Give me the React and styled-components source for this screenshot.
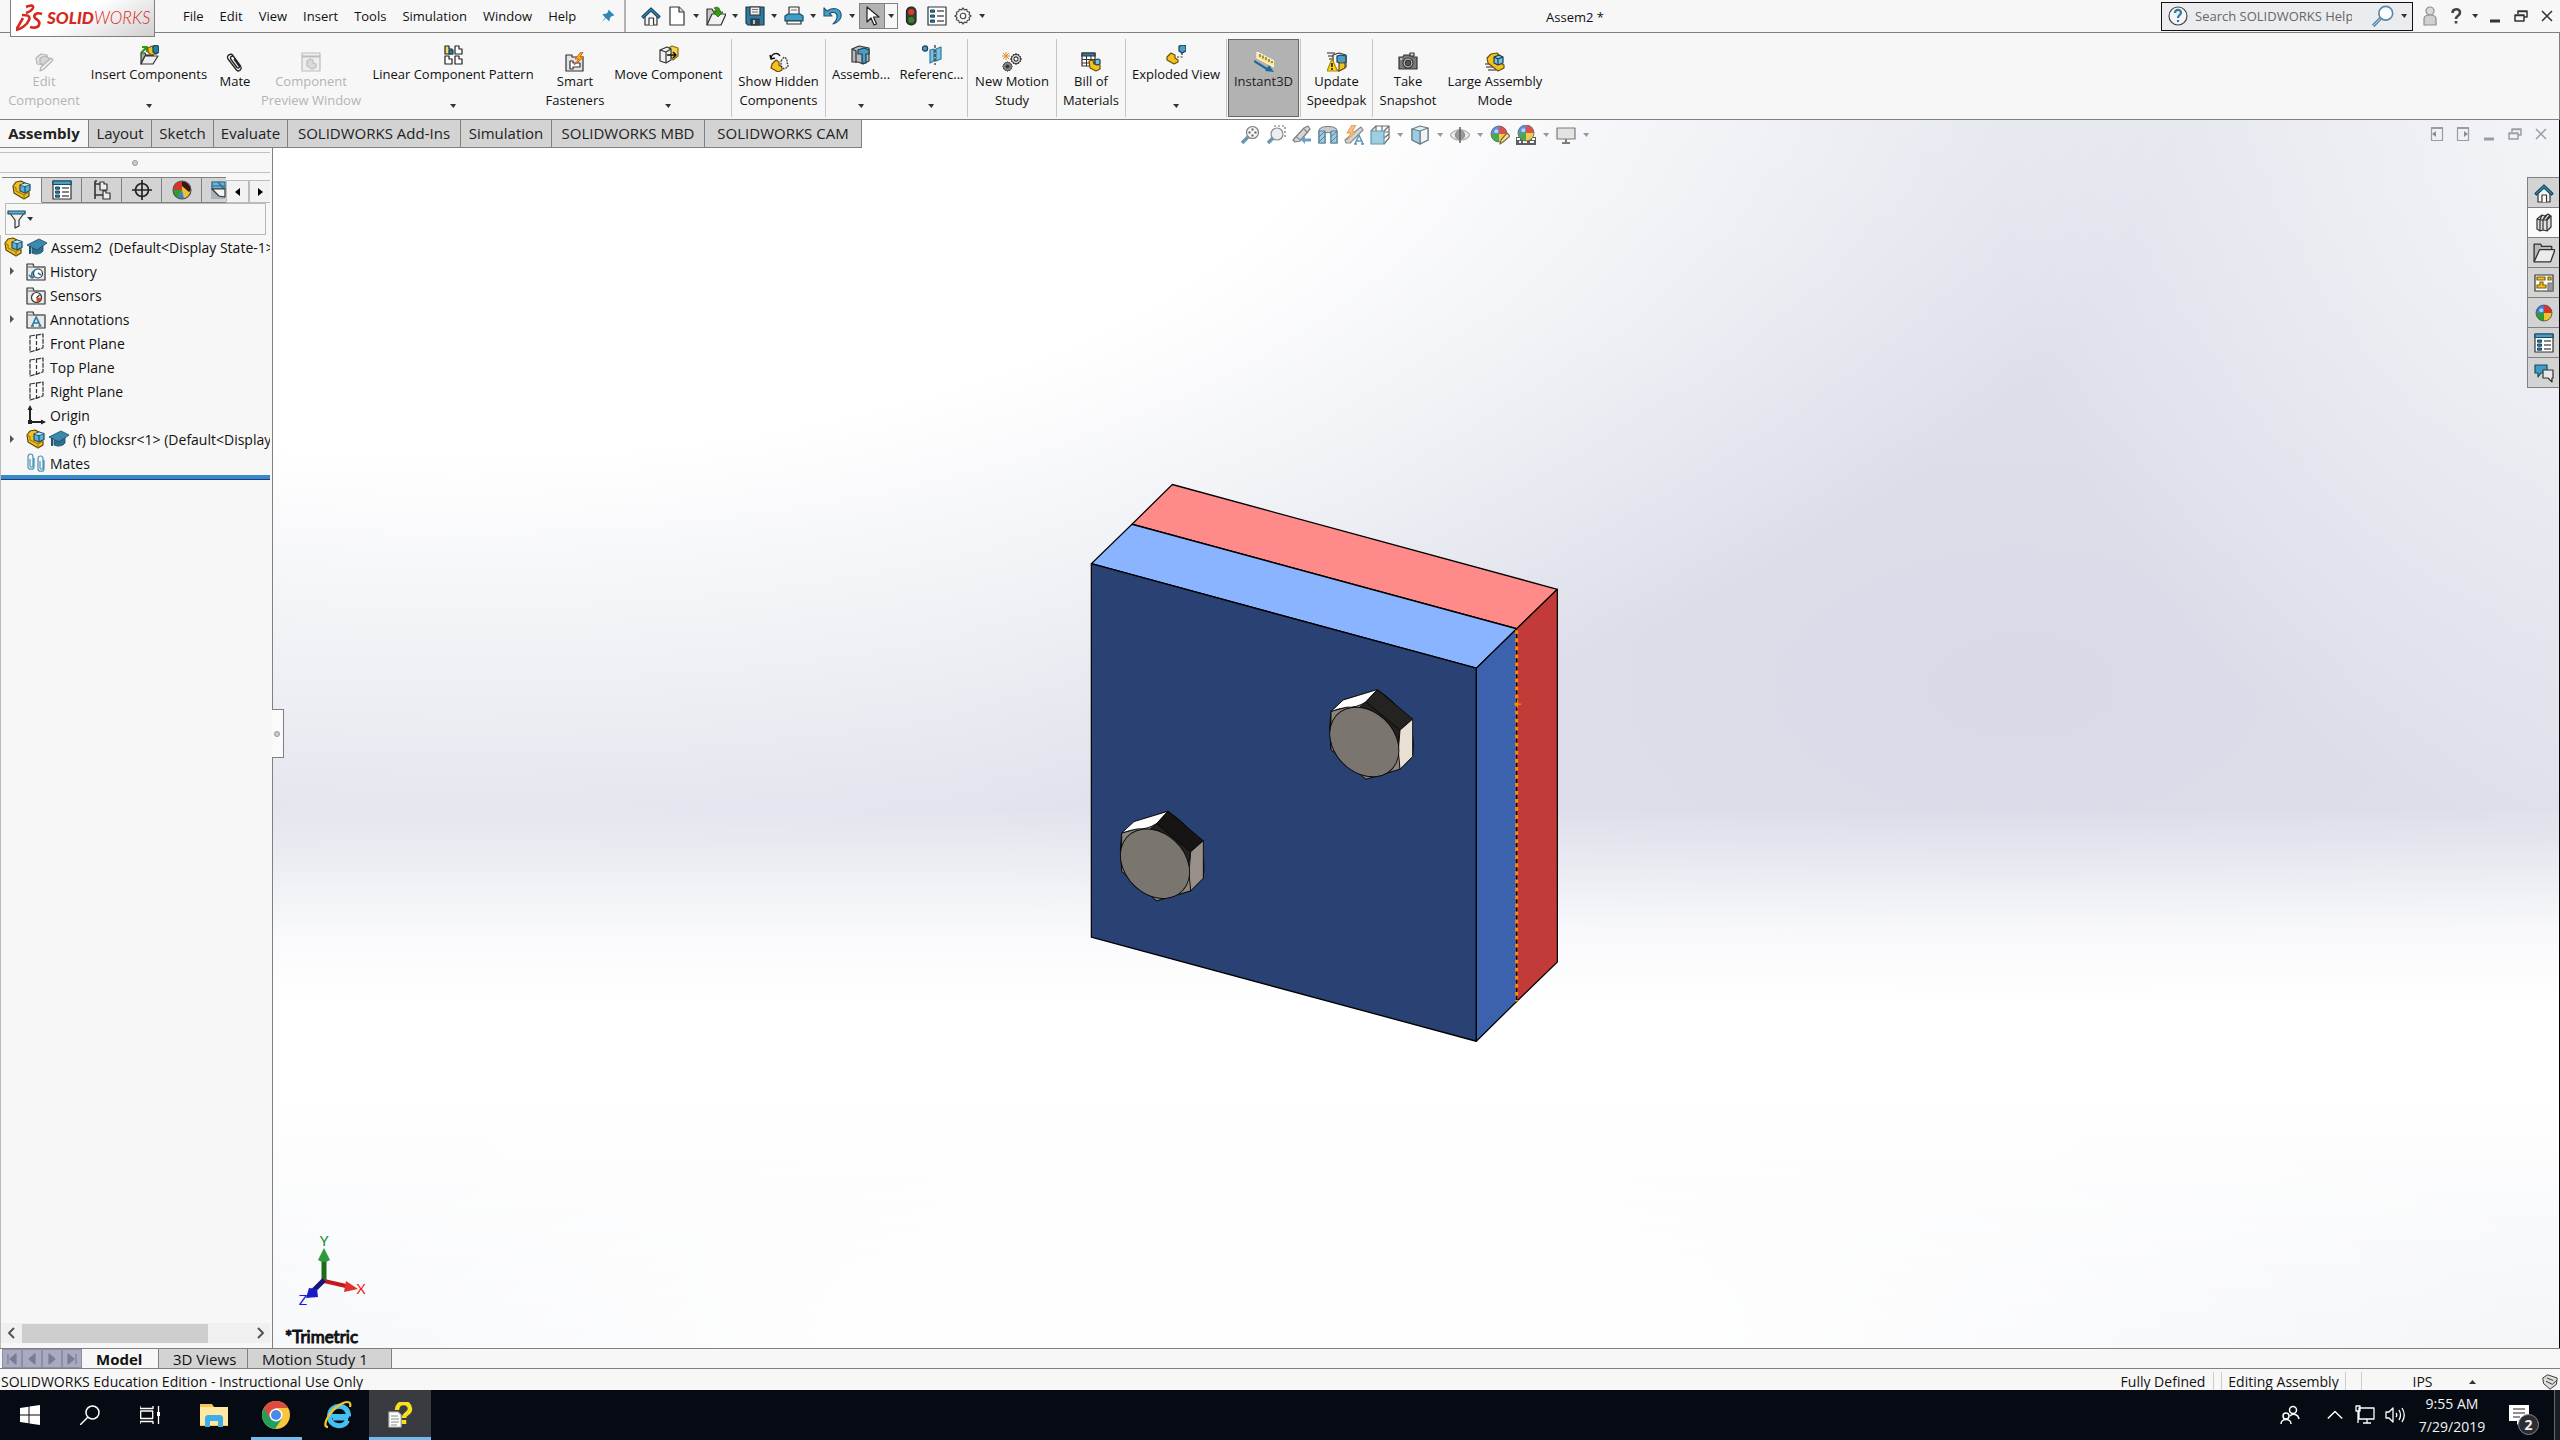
import React from "react";
import styled, { createGlobalStyle, css } from "styled-components";

/* ---------- palette ---------- */
const line = "#808080";
const soft = "#c0c0c0";
const chrome = "#f7f7f7";
const tabGrey = "#d3d3d3";
const ink = "#333";
const blue = "#2b7ba3";
const sky = "#7cc0de";
const gold = "#f5c11e";

const Global = createGlobalStyle`
  *, *::before, *::after { box-sizing: border-box; }
  body { margin: 0; background: ${chrome}; color: #111; font: 13px/19px "Open Sans", "Noto Sans", sans-serif; }
  button, input { font: inherit; color: inherit; margin: 0; padding: 0; border: 0; background: none; border-radius: 0; }
  ul { list-style: none; margin: 0; padding: 0; }
  svg { display: block; flex: none; }
`;

/* ---------- icons ---------- */
const Svg = ({ size = 20, box = 20, children, ...rest }) => (
  <svg width={size} height={size} viewBox={`0 0 ${box} ${box}`} fill="none" stroke={ink} strokeWidth="1.2" strokeLinejoin="round" aria-hidden="true" {...rest}>
    {children}
  </svg>
);

const Caret = ({ color = "#333", up }) => (
  <svg width="7" height="4" viewBox="0 0 7 4" aria-hidden="true">
    <path d={up ? "M3.500 0 7 4H0z" : "M0 0h6L3.500 4z"} fill={color} />
  </svg>
);

const AssemblyIcon = (p) => (
  <Svg {...p}>
    <path d="M1 6 4 2l5-1 4 2v7l4 2v4l-5 3L2 13z" fill={gold} stroke="#5a4610" />
    <path d="M1 6l3 2v3l8 4v4M12 15l5-3" stroke="#a67c0a" />
    <path d="M8 5l5-2 5 1.500v6L13 13l-5-2z" fill="#5fb0d4" stroke="#1c4f6b" />
    <path d="M8 5l5 1.500L18 4.500M13 6.500V13" stroke="#1c4f6b" />
    <path d="M8.500 5l4.500-1.500 4.500 1.200L13 6z" fill="#c4e5f3" stroke="none" />
  </Svg>
);
const EditComponentIcon = () => (
  <Svg stroke="#b5b5b5">
    <path d="M2 6l5-4 6 1 1 5-3 5-8-1z" fill="#e4e4e4" />
    <path d="M6 6l5-2 4 2v5l-5 2-4-2z" fill="#d4d4d4" />
    <path d="M17 6l2 2-9 9-4 2 1-4z" fill="#eee" />
  </Svg>
);
const InsertIcon = () => (
  <Svg>
    <path d="M2 19V8h4l1 2h7v1H6z" fill="#aaa" />
    <path d="M2 19 6 11h13l-5 8z" fill="#eee" />
    <path d="M2 8l5-5M3 2h5v5" stroke="#2e9a16" strokeWidth="2.200" />
    <path d="M9 3l4-2 3 4v4l-4 1-3-3z" fill={gold} stroke="#7a5c06" />
    <path d="M14 1l4-1 2 2v5l-3 2-3-2z" fill={blue} stroke="#154055" />
  </Svg>
);
const MateIcon = () => (
  <Svg>
    <path d="M16 15 8 3.500C6 1 1 3 3 7l8.500 11c2.500 2.500 6-1 4-4L9 5C7 3 4.500 5 6 7.500l6 8c1.500 1.200 3 0 2-1.500L9 7" stroke="#222" strokeWidth="1.300" />
  </Svg>
);
const PreviewIcon = () => (
  <Svg stroke="#bdbdbd">
    <path d="M1 1h18v18H1z" fill="#eee" />
    <path d="M1 4.500h18" strokeWidth="2" />
    <path d="M6 9l3-2 3 1v3l3 1v3l-4 2-5-3z" fill="#d9d9d9" />
  </Svg>
);
const PatternIcon = () => (
  <Svg>
    {[[2, 1], [12, 1], [2, 11], [12, 11]].map(([x, y], i) => (
      <g key={i} transform={`translate(${x} ${y})`}>
        <path d="M0 0h4v3h3v5H0z" fill={i ? "#fff" : "#f7d774"} stroke="#222" />
        {i === 0 && <path d="M4 4h4v4H4z" fill={blue} stroke="#154055" />}
      </g>
    ))}
  </Svg>
);
const SmartIcon = () => (
  <Svg>
    <path d="M1 3h6v2h11v14H1z" fill="#e4e4e4" />
    <path d="M5 9h3v2h7v4H8v2H5z" fill="#fff" />
    <path d="M16 0l-6 7h4l-5 6 10-8h-4l3-5z" fill="#fcb514" stroke="#c4541a" strokeWidth="0.900" />
  </Svg>
);
const MoveIcon = () => (
  <Svg>
    <path d="M8 4l5-3 6 2v8l-5 4z" fill="#f6cf55" stroke="#8a6a0c" />
    <path d="M1 5l7-3 4 2v11l-5 3-6-2z" fill="#f0f0f0" />
    <path d="M1 5l6 2 5-3M7 7v11" />
    <path d="M8 10h9M14 7l3 3-3 3" stroke="#111" strokeWidth="1.500" />
  </Svg>
);
const ShowHiddenIcon = () => (
  <Svg>
    <path d="M2 6c1-5 7-6 9-2M1 3l1 4 4-1" stroke="#111" strokeWidth="1.500" />
    <path d="M3 12l4-4 3 2v3l3 2v3l-4 2-7-4z" fill={gold} stroke="#6a500a" />
    <path d="M12 9l3-4 3 2v4l1 1v3l-4 2-3-3z" fill="#f3f3f3" strokeDasharray="2 1" />
  </Svg>
);
const AssemblyFeatIcon = () => (
  <Svg>
    <path d="M1 4l7-3 10 2v13l-6 3-5-2-6 0z" fill="#b9b9b9" />
    <path d="M7 5l6-2 5 2v4h-3v9h-4V9H7z" fill="#4a9ec4" stroke="#154055" />
    <path d="M1 4l4 2v12" />
  </Svg>
);
const ReferenceIcon = () => (
  <Svg>
    <circle cx="3" cy="3.500" r="2.600" fill="#4a9ec4" stroke="#154055" />
    <path d="M8 5l4-1v12l-4 2zM14 4l5-2v12l-5 2z" fill="#7cc0de" stroke={blue} />
    <path d="M13 0v20" stroke="#222" strokeDasharray="3 1.500" />
  </Svg>
);
const gearPath = "M10 1l1.500 2.200 2.600-.7.700 2.600 2.600.7-.7 2.600L19 10l-2.300 1.600.7 2.600-2.600.7-.7 2.600-2.600-.7L10 19l-1.500-2.200-2.600.7-.7-2.600-2.600-.7.700-2.600L1 10l2.300-1.600-.7-2.600 2.600-.7.700-2.600 2.600.7z";
const GearIcon = (p) => (
  <Svg {...p}>
    <path d={gearPath} fill="#f4f4f4" stroke="#444" />
    <circle cx="10" cy="10" r="3" fill="#fff" stroke="#444" />
  </Svg>
);
const MotionIcon = () => (
  <Svg>
    <path d="M4 0v8M0 4h8M1 1l6 6M7 1 1 7" stroke="#e08a2a" strokeWidth="1" />
    <g transform="translate(8 1) scale(.6)"><path d={gearPath} fill="#fff" strokeWidth="1.800" /><circle cx="10" cy="10" r="3.500" strokeWidth="1.800" /></g>
    <g transform="translate(0 9) scale(.55)"><path d={gearPath} fill="#8a8a8a" strokeWidth="1.600" /><circle cx="10" cy="10" r="3" fill="#333" /></g>
  </Svg>
);
const BomIcon = () => (
  <Svg>
    <path d="M1 1h13v13H1z" fill="#fff" />
    <path d="M1 1h13v3H1z" fill={blue} />
    <path d="M1 7.500h13M1 11h13M5.500 4v10M10 4v10" strokeWidth="1" />
    <path d="M8 9l4-1 1 4 6 1v4l-4 2-6-3z" fill={gold} stroke="#6a500a" />
    <path d="M14 8l3-1 2 1v4l-3 1-2-1z" fill={sky} stroke="#154055" />
  </Svg>
);
const ExplodedIcon = () => (
  <Svg>
    <path d="M1 12l4-4 4 2v3l3 2v2l-4 2-7-4z" fill={gold} stroke="#6a500a" />
    <path d="M13 1l4-1 3 1v5l-4 2-3-2z" fill="#4a9ec4" stroke="#154055" />
    <path d="M16 8v4h-5" stroke="#333" strokeDasharray="2 1.500" />
  </Svg>
);
const Instant3DIcon = () => (
  <Svg>
    <path d="M3 0l17 9v6L3 6z" fill="#ffe27a" stroke="#fff8d8" />
    <path d="M6 2v3M9 3.500v3M12 5v3M15 7v3M18 9v2" stroke="#444" strokeWidth="1" />
    <path d="M0 9l13 8" stroke="#1f6b96" strokeWidth="2.200" />
    <path d="M20 20l-9-1 4-6z" fill="#1f6b96" stroke="none" />
  </Svg>
);
const SpeedpakIcon = () => (
  <Svg>
    <path d="M0 1h8M1 4h6M2 7h4" stroke="#222" strokeWidth="1" />
    <path d="M6 3l6-2 7 2v12l-7 4-6-3z" fill="#f4f4f4" />
    <path d="M10 4l4-1 5 1v6l-4 2-5-2z" fill="#4a9ec4" stroke="#154055" />
    <path d="M12 11l6 0v5l-6 3z" fill={gold} stroke="#6a500a" />
    <path d="M5 7l5.500 12H0z" fill="#ffd51c" stroke="#b08800" />
    <path d="M5 11v4M5 16v2" stroke="#111" strokeWidth="1.500" />
  </Svg>
);
const CameraIcon = () => (
  <Svg>
    <path d="M1 5h4l1-2h8l1 2h4v12H1z" fill="#7b7b7b" />
    <path d="M12 1h4v3h-4z" fill="#ddd" />
    <circle cx="10" cy="11" r="5" fill="#ddd" />
    <circle cx="10" cy="11" r="2.800" fill="#555" />
    <path d="M2 7h2" stroke="#fff" />
  </Svg>
);
const LargeAsmIcon = () => (
  <Svg>
    <path d="M0 12h6M1 15h7M3 18h8" stroke="#222" />
    <path d="M2 6l4-4 6-1 3 3v7l4 2v3l-6 3-10-8z" fill={gold} stroke="#6a500a" />
    <path d="M9 5l5-2 4 2v6l-5 2-4-2z" fill="#7cc0de" stroke="#154055" />
    <path d="M9 5l4 2 5-2M13 7v6" stroke="#154055" />
  </Svg>
);
const HomeIcon = (p) => (
  <Svg {...p}>
    <path d="M4 10v9h12v-9l-6-6z" fill="#f4f4f4" />
    <path d="M8 19v-7h4.500v7" fill="#fff" />
    <path d="M1 10.500 10 2l9 8.500-1.500 1.500L10 5l-7.500 7z" fill="#3f9cc8" stroke="#174a63" />
  </Svg>
);
const NewIcon = () => (
  <Svg><path d="M3 1h9l5 5v13H3z" fill="#fff" /><path d="M12 1v5h5" fill="#ddd" /></Svg>
);
const OpenIcon = () => (
  <Svg>
    <path d="M1 19V3h5l1 2h7v3" fill="#c8c8c8" />
    <path d="M1 19 6 8h14l-5 11z" fill="#f1f1f1" />
    <path d="M8 2c4-2 6 0 6 4h3l-5 5-5-5h3c0-2 0-3-2-4z" fill="#3a9a16" stroke="#1f6a08" strokeWidth="0.800" />
  </Svg>
);
const SaveIcon = () => (
  <Svg>
    <path d="M1 1h18v18H3l-2-2z" fill={blue} stroke="#1c3d4e" />
    <path d="M5 1h10v8H5z" fill="#eee" /><path d="M7 3.500h6M7 6h6" stroke="#777" strokeWidth="1" />
    <path d="M6 13h8v6H6z" fill="#444" /><path d="M8 14h2v4H8z" fill="#8fd0ec" stroke="none" />
  </Svg>
);
const PrintIcon = () => (
  <Svg>
    <path d="M5 8V1h10v7" fill="#f4f4f4" /><path d="M7 4h6" stroke="#888" />
    <path d="M1 10l3-2h12l3 2v5H1z" fill="#3f9cc8" stroke="#174a63" />
    <path d="M3 15h14v3H3z" fill="#fff" />
  </Svg>
);
const UndoIcon = () => (
  <Svg><path d="M1 2v8h8L6.500 7.500C10 5 15 7 14 11c0 3-2 5-4 7 6-2 9-6 8-10C17 2 9 1 4 5z" fill="#4a9ec4" stroke="#215b78" /></Svg>
);
const CursorIcon = () => (
  <Svg><path d="M5 1v15l4-4 3 7 2.500-1L11.500 11H17z" fill="#fff" stroke="#222" /></Svg>
);
const TrafficIcon = () => (
  <Svg>
    <rect x="5.500" y="1" width="9.500" height="18" rx="4.500" fill="#3a3a3a" stroke="#222" />
    <circle cx="10.200" cy="6" r="3" fill="#e23a1c" stroke="none" /><circle cx="10.200" cy="14" r="3" fill="#2c8a1c" stroke="none" />
  </Svg>
);
const ListIcon = ({ header, ...p }) => (
  <Svg {...p}>
    <path d="M1 1h18v18H1z" fill="#fff" />
    {header && <path d="M1 1h18v3.500H1z" fill="#4a9ec4" stroke="#174a63" />}
    {(header ? [7, 11, 15] : [4, 9, 14]).map((y) => (
      <g key={y}><path d={`M3.500 ${y}h4v2.200h-4z`} fill={blue} stroke="#174a63" strokeWidth="1" /><path d={`M10 ${y + 1}h7`} strokeWidth="1.200" /></g>
    ))}
  </Svg>
);
const PinIcon = () => (
  <Svg size={14} stroke="none"><path d="M11 1l8 8-2 1-1-.5-3.500 3.500c.5 2 0 3.500-1 4.500L7 13l-6 6 5-7-4-4c1.500-1.300 3-1.500 5-1L10.500 4 10 3z" fill="#2f86b8" /></Svg>
);
const UserIcon = () => (
  <Svg stroke="#8d8d8d"><circle cx="10" cy="5" r="4" fill="#d9d9d9" /><path d="M4 19v-6c0-3 2-4 6-4s6 1 6 4v6z" fill="#d0d0d0" /></Svg>
);
const HelpCircle = () => (
  <Svg><circle cx="10" cy="10" r="9" fill="#f5f5f5" stroke="#444" /><path d="M7 7c0-4 6-4 6-.5C13 9 10 9 10 12M10 14v2" stroke={blue} strokeWidth="2.200" /></Svg>
);
const HelpMark = () => (
  <Svg><path d="M6.500 7c0-5 7.500-5 7.500-.5C14 10 10 9.500 10 13M10 15v2.500" stroke="#444" strokeWidth="2.600" /></Svg>
);
const Magnifier = ({ size = 22 }) => (
  <Svg size={size}>
    <path d="M8 12 1 19" stroke="#3f6e96" strokeWidth="3" /><path d="M8 12 1 19" stroke="#a9d0e8" strokeWidth="1.200" />
    <circle cx="12.500" cy="7.500" r="6.300" fill="#fbfdff" stroke="#5d88ad" strokeWidth="1.500" />
  </Svg>
);
const MinIcon = ({ color = ink }) => <Svg size={16} box={16} stroke={color}><path d="M3 13h10" strokeWidth="3" /></Svg>;
const RestoreIcon = ({ color = ink }) => <Svg size={16} box={16} stroke={color} strokeWidth="1.500"><path d="M5 6V3h9v6h-3M2 7h9v6H2zM2 7.500h9M5 3.500h9" /></Svg>;
const CloseIcon = ({ color = ink }) => <Svg size={16} box={16} stroke={color} strokeWidth="1.500"><path d="M3 3l10 10M13 3 3 13" /></Svg>;
const PaneIcon = ({ right }) => (
  <Svg size={16} box={16} stroke="#9a9da2"><path d="M2.500 1.500h11v13h-11zM2.500 2.500h11" /><path d={right ? "M9 5v6l4-3z" : "M7 5v6L3 8z"} fill="#8a8d92" stroke="none" /></Svg>
);

/* heads-up view toolbar */
const ZoomFit = () => (
  <Svg><path d="M8 12 2 18" stroke="#4c86a8" strokeWidth="3.500" /><circle cx="12.500" cy="7.500" r="6" fill="#f4f4f4" stroke="#666" /><path d="M12.500 3.500v2M12.500 9.500v2M8.500 7.500h2M14.500 7.500h2" stroke="#444" strokeWidth="2" /></Svg>
);
const ZoomArea = () => (
  <Svg><path d="M8 1h11v12" stroke="#555" strokeDasharray="2 2" /><path d="M7 13 2 18" stroke="#4c86a8" strokeWidth="3.500" /><circle cx="11" cy="9" r="6" fill="#e8edf1" stroke="#777" /></Svg>
);
const PrevView = () => (
  <Svg><path d="M1 15 12 3l4-2 2 3-5 6-5 6-5 1z" fill="#cfcfcf" stroke="#666" /><path d="M4 12l5 3M12 4l4 4" stroke="#777" /><path d="M9 15l4-4v2.500h6v3h-6V19z" fill="#4c93bb" stroke="none" /></Svg>
);
const SectionIcon = () => (
  <Svg><path d="M1 6c0-6 18-6 18 0v12h-6V9c0-2-6-2-6 0v9H1z" fill="#c4c4c4" stroke="#666" /><path d="M1 6h6v12H1zM13 6h6v12h-6z" fill="#8fc0d8" stroke="#36708e" /><path d="M1 12l6-6M1 17l6-6M13 12l6-6M13 17l6-6" stroke="#36708e" strokeWidth="1" /></Svg>
);
const DynAnnot = () => (
  <Svg><path d="M1 15 13 5l4-3 2 3-8 8-5 5-4 0z" fill="#d0d0d0" stroke="#777" /><path d="M12 0H8L3 8h4l-4 7 9-8H8z" fill="#f7b96a" stroke="#d07a2c" strokeWidth="0.900" /><path d="M11 19l4-9 4 9M12.500 16h5M10 19h3M17 19h3" stroke="#3f86ad" strokeWidth="1.500" /></Svg>
);
const OrientIcon = () => (
  <Svg stroke="#555"><path d="M1 6l5-5h13v12l-5 6" fill="#fafafa" /><path d="M6 1v5M14 6l5-5M12 1v5M19 7h-5M14 13l5-4" /><path d="M1 6h13v13H1z" fill="#8fc6dd" stroke="#4486a5" /></Svg>
);
const DisplayStyle = () => (
  <Svg stroke="#567"><path d="M2 4l8-3 8 2v12l-8 4-8-4z" fill="#d7ecf5" /><path d="M10 6l8-3v12l-8 4z" fill="#f2f2f2" /><path d="M2 4l8 2v13l-8-4z" fill="#8cc4dc" /></Svg>
);
const EyeIcon = () => (
  <Svg stroke="#999"><path d="M0 10c5-7 15-7 20 0-5 7-15 7-20 0z" fill="#e8e8e8" /><circle cx="10" cy="10" r="4.500" fill="#8a8a8a" stroke="#777" /><path d="M10 2v16" stroke="#444" strokeWidth="1.500" /></Svg>
);
const Ball = ({ r = 9, cx = 10, cy = 10 }) => (
  <g stroke="none">
    <path d={`M${cx} ${cy}V${cy - r}A${r} ${r} 0 0 0 ${cx - r} ${cy}z`} fill="#3d7be0" />
    <path d={`M${cx} ${cy}V${cy - r}A${r} ${r} 0 0 1 ${cx + r} ${cy}z`} fill="#d8342c" />
    <path d={`M${cx} ${cy}V${cy + r}A${r} ${r} 0 0 1 ${cx - r} ${cy}z`} fill="#2f9c2c" />
    <path d={`M${cx} ${cy}V${cy + r}A${r} ${r} 0 0 0 ${cx + r} ${cy}z`} fill="#ecc62a" />
    <circle cx={cx} cy={cy} r={r} stroke="#555" strokeWidth="0.900" fill="none" />
    <circle cx={cx - r / 3} cy={cy - r / 3} r={r / 4} fill="#fff" opacity="0.600" />
  </g>
);
const BallIcon = (p) => <Svg {...p}><Ball r={8} /></Svg>;
const DisplayBall = () => (
  <Svg stroke="none">
    <circle cx="10" cy="10" r="9" fill="#e8c52c" />
    <path d="M10 10V1a9 9 0 0 0-9 9z" fill="#d8342c" /><path d="M10 10H1a9 9 0 0 0 5 8z" fill="#2f9c2c" /><path d="M10 10 6 18a9 9 0 0 0 6 .8z" fill="#3d7be0" />
    <path d="M10 1a9 9 0 0 1 9 9l-2 2-7-6z" fill="#3a1414" /><circle cx="10" cy="10" r="9" fill="none" stroke="#555" />
  </Svg>
);
const EditAppear = () => <Svg><Ball r={8} cx={9} cy={9} /><path d="M10 19l1-4 6-7 3 3-7 6z" fill="#ffe08a" stroke="#6b5222" /></Svg>;
const SceneIcon = () => <Svg><path d="M0 12h20v8H0z" fill="#444" stroke="none" /><path d="M1 14h3M7 17h4M14 17h4M3 17h2M16 14h3" stroke="#fff" strokeWidth="2" /><Ball r={8} cx={10} cy={8} /></Svg>;
const MonitorIcon = () => <Svg stroke="#666"><path d="M1 3h18v11H1z" fill="#e0e0e0" /><path d="M10 14v4M6 18h8" strokeWidth="2" /></Svg>;

/* feature-tree icons */
const ConfigIcon = () => <Svg><path d="M3 1v18M3 4h5M3 15h8M3 1h2" strokeWidth="1.600" /><path d="M8 2h4v2h3v6H8zM11 11h3v2h4v6h-7z" fill="#eee" /></Svg>;
const TargetIcon = () => <Svg stroke="#222" strokeWidth="1.700"><circle cx="10" cy="10" r="6.500" /><path d="M10 0v20M0 10h20" /></Svg>;
const CamIcon = () => <Svg><path d="M1 1h14v18H1z" fill="#aab2bc" stroke="none" /><path d="M2 2h13v7H2z" fill="#6db3d3" stroke="#2a6a8a" /><path d="M2 6h13M8 2l6 7" stroke="#2a6a8a" /><path d="M2 9l7 7 6 1V9z" fill="#f4f4f4" /></Svg>;
const FunnelIcon = () => <Svg><path d="M2 3h16l-6 8v6l-4 2v-8z" fill="#f0f0f0" /><path d="M1 2h17v3H1z" fill="#5db0d2" stroke="#174a63" /></Svg>;
const CapIcon = () => (
  <Svg stroke="#1f5470" strokeWidth="0.900"><path d="M0 8l12-6 8 4-10 7z" fill="#3e88ad" /><path d="M5 11l5 2 6-4v5c-2 3-7 4-11 2z" fill="#2d6f92" /><path d="M3 9v8" strokeWidth="2" /></Svg>
);
const Folder = ({ children }) => <Svg><path d="M1 3h6l1 3h11v13H1z" fill="#e9e9e9" /><path d="M1 6h18" stroke="#777" />{children}</Svg>;
const HistoryIcon = () => <Folder><circle cx="12" cy="12.500" r="4.500" fill="#fff" /><path d="M12 12l3 2M9 9c-3 2-4 4-3 7M3 14l3 3 3-2" stroke={blue} strokeWidth="1.600" /></Folder>;
const SensorIcon = () => <Folder><circle cx="10.500" cy="12.500" r="5" fill="#fff" /><path d="M10.500 13l3-3" /><path d="M15 12.500a4.500 4.500 0 0 1-4.500 4.500v-4z" fill="#e2481c" stroke="none" /></Folder>;
const AnnotIcon = () => <Folder><path d="M6 17l4.200-9L14.500 17M7.500 14h5.500M5 17h3M12.500 17h3" stroke={blue} strokeWidth="1.700" /></Folder>;
const PlaneIcon = () => <Svg><path d="M4 3l13-2v14L4 19z" fill="#fafafa" strokeDasharray="5 1" /><path d="M10.500 2v16" strokeDasharray="4 2" /></Svg>;
const OriginIcon = () => <Svg stroke="#222" strokeWidth="2"><path d="M4 2v15h14" /><path d="M4 0l2.500 5h-5zM20 17l-5 2.500v-5zM2 15h4v4H2z" fill="#222" stroke="none" /></Svg>;
const MatesIcon = () => <Svg stroke="#4a93b4"><path d="M8 5v9c0 3-6 3-6 0V4c0-4 5-4 5 0v9c0 1.500-3 1.500-3 0V6M18 7v9c0 3-6 3-6 0V6c0-4 5-4 5 0v9c0 1.500-3 1.500-3 0V8" /></Svg>;

/* task pane */
const LibraryIcon = () => <Svg><path d="M3 6l5-4 3 1 3-2 3 2v11l-4 4-4-1-3 1-3-2z" fill="#e0e0e0" /><path d="M3 6l3 1v11M8 2 6 7M11 3 9 7v10M6 7l3 0 4-5M9 7l3 0 4-5M13 7v11M12 7l1 0 4-4" /></Svg>;
const FolderOpen = () => <Svg size={22}><path d="M1 18V2h6l1 2h9v3" fill="#b8b8b8" /><path d="M1 18 6 7h14l-4 11z" fill="#ececec" /></Svg>;
const PaletteIcon = () => <Svg><path d="M1 2h18v16H1z" fill="#fff" /><path d="M3 4h8v3H3zM14 4h3v3h-3zM6 9h3v3h3v3H3v-3h3z" fill={gold} stroke="#7a5c06" /><path d="M14 10h5v8h-5z" fill="#999" stroke="#777" /></Svg>;
const ForumIcon = () => <Svg><path d="M1 2h12v8H7l-3 4v-4H1z" fill="#3f9cc8" stroke="#174a63" /><path d="M9 7h10v8h-1v4l-4-4H9z" fill="#e9e9e9" /></Svg>;

/* taskbar */
const WinIcon = () => <Svg stroke="none"><path d="M0 3l8.500-1.200V9.500H0zM9.500 1.600 20 0v9.500H9.500zM0 10.500h8.500v7.700L0 17zM9.500 10.500H20V20L9.500 18.400z" fill="#fff" /></Svg>;
const SearchIcon = () => <Svg stroke="#fff" strokeWidth="1.500"><circle cx="12.500" cy="7.500" r="6.500" /><path d="M8 12 0 20" /></Svg>;
const TaskViewIcon = () => <Svg stroke="#fff" strokeWidth="1.300"><path d="M0 1v2.500h13V1M0 19v-2.500h13V19M.7 6h12v7.500H.7zM18.500 1v18" /><path d="M17 7h3v4h-3z" fill="#fff" stroke="none" /></Svg>;
const ExplorerIcon = () => (
  <svg width="28" height="24" viewBox="0 0 28 24" aria-hidden="true"><path d="M0 1h12l2 3h14v19H0z" fill="#f5c653" /><path d="M0 4h28v18H0z" fill="#ffe9a2" /><path d="M5 24V14l2-2h14l2 2v10h-5v-6h-8v6z" fill="#3eaee8" /></svg>
);
const ChromeIcon = () => (
  <Svg size={28} box={28} stroke="none">
    <circle cx="14" cy="14" r="14" fill="#fbc63c" />
    <path d="M1.900 7A14 14 0 0 0 13 28l7-10.500-6 2.500z" fill="#1fa15d" />
    <path d="M1.900 7A14 14 0 0 1 26.100 7H14L8 17.500z" fill="#dd4b3e" />
    <circle cx="14" cy="14" r="6.500" fill="#fff" /><circle cx="14" cy="14" r="5" fill="#4a87ee" />
  </Svg>
);
const IeIcon = () => (
  <Svg size={30} box={30}>
    <path d="M25 18H10M25.500 16.500C26 3 7 3 6.500 16c0 12 15 12 18 4.500" stroke="#46c0f0" strokeWidth="5" />
    <path d="M9 16h17" stroke="#46c0f0" strokeWidth="4" />
    <path d="M5 27C-2 27 6 12 15 6c7-5 14-6 12 1" stroke="#f2c62a" strokeWidth="2.200" />
  </Svg>
);
const HelpAppIcon = () => (
  <Svg size={26} box={26}><path d="M10 8c0-9 13-9 13-1 0 5-6 4-6 9M17 18v4" stroke="#f5df1e" strokeWidth="4.500" /><path d="M2 10h9l3 3v12H2z" fill="#fff" stroke="#bbb" /><path d="M4 14h7M4 17h8M4 20h8M4 23h6" stroke="#888" /></Svg>
);
const PeopleIcon = () => <Svg stroke="#fff" strokeWidth="1.500"><circle cx="13" cy="5" r="3.500" /><circle cx="6" cy="11" r="3" /><path d="M1 19c0-6 10-6 10 0M10 11c3-3 8-2 9 3" /></Svg>;
const ChevronUp = () => <Svg size={18} stroke="#fff" strokeWidth="1.600"><path d="M2 14l8-8 8 8" /></Svg>;
const NetIcon = () => <Svg stroke="#fff" strokeWidth="1.300"><path d="M4 3h15v11H4zM8 18h8M12 14v4M1 1h4v5H1zM3 6v12" /></Svg>;
const VolumeIcon = () => <Svg stroke="#fff" strokeWidth="1.300"><path d="M1 7h3l4-4v14l-4-4H1zM11 8q1.500 2 0 4M14 5q3 5 0 10M17 3q4.500 7 0 14" /></Svg>;
const NotifyIcon = () => <Svg stroke="none"><path d="M0 0h20v16h-8l-4 4v-4H0z" fill="#fff" /><path d="M4 4h12M4 8h12M4 12h7" stroke="#222" /></Svg>;
const TagIcon = () => <Svg size={16}><path d="M1 5l6-4 12 4-1 8-8 6L2 12z" fill="#ddd" /><path d="M6 5l8 3M5 9l8 4M13 13l5-5" /></Svg>;

/* ---------- frame ---------- */
const Frame = styled.div`
  display: flex;
  flex-direction: column;
  min-height: 100vh;
`;
const TitleBar = styled.header`
  display: flex;
  height: 33px;
  border-bottom: 1px solid ${line};
`;
const TitleLeft = styled.div`
  display: flex;
  align-items: center;
  width: 626px;
  padding: 0 3px 0 10px;
  border-right: 2px solid #b4b4b4;
`;
const Logo = styled.div`
  position: relative;
  z-index: 1;
  align-self: flex-start;
  display: flex;
  align-items: center;
  gap: 4px;
  width: 145px;
  height: 37px;
  padding: 0 4px 1px 5px;
  border: 1px solid ${line};
  border-top: 0;
  background: linear-gradient(150deg, #fff 45%, #d0d0d0);
  color: #d8281e;
  font: italic 300 17px/20px Lato, sans-serif;
  b { font-weight: 900; }
`;
const Menu = styled.nav`
  display: flex;
  gap: 16px;
  margin: 0 auto 0 28px;
`;
const MenuButton = styled.button`
  white-space: nowrap;
  line-height: 20px;
`;
const IconButton = styled.button`
  display: flex;
  align-items: center;
  justify-content: center;
  flex: none;
  width: 26px;
  height: 26px;
`;
const CaretButton = styled.button`
  display: flex;
  align-items: center;
  justify-content: center;
  flex: none;
  width: ${(p) => p.$w || 13}px;
  height: 26px;
`;
const QuickBar = styled.div`
  display: flex;
  align-items: center;
  padding-left: 12px;
`;
const Selected = styled.div`
  display: flex;
  outline: 1px solid ${line};
  outline-offset: -1px;
  ${IconButton} { background: #b2b2b2; border: 1px solid ${line}; }
`;
const DocTitle = styled.h1`
  flex: 1;
  margin: 0;
  text-align: center;
  font: inherit;
  line-height: 34px;
`;
const TitleRight = styled.div`
  display: flex;
  align-items: center;
`;
const SearchBox = styled.label`
  display: flex;
  align-items: center;
  gap: 7px;
  width: 252px;
  height: 29px;
  margin-right: 4px;
  padding: 0 4px 0 6px;
  border: 1px solid #111;
  background: #ebecf0;
  input { flex: 1; min-width: 0; outline: 0; }
  input::placeholder { color: #666; opacity: 1; }
`;

/* ---------- ribbon ---------- */
const Ribbon = styled.div`
  display: flex;
  height: 87px;
  padding: 6px 0 2px;
  border-bottom: 1px solid ${line};
  border-right: 1px solid ${line};
`;
const RibbonButton = styled.button`
  display: flex;
  flex-direction: column;
  align-items: center;
  flex: none;
  width: ${(p) => p.$w}px;
  padding: ${(p) => (p.$menu ? 6 : 13)}px 0 9px;
  white-space: pre;
  text-align: center;
  ${(p) => p.disabled && css`color: #b4b4b4;`}
  ${(p) => p.$on && css`
    margin: 0 1px;
    padding: 12px 0 9px;
    border: 1px solid #666;
    background: #b2b2b2;
    color: #222;
  `}
  > svg:last-child:not(:first-child) { margin-top: auto; }
`;
const Divider = styled.span`
  flex: none;
  width: 1px;
  background: #c6c6c6;
`;

/* ---------- workspace ---------- */
const Workspace = styled.main`
  flex: 1;
  display: flex;
  flex-direction: column;
  border-right: 1px solid #000;
  background:
    radial-gradient(ellipse 55% 30% at 50% 100%, rgba(255,255,255,.9) 30%, rgba(255,255,255,0) 100%),
    linear-gradient(to bottom, rgba(255,255,255,0) 56%, rgba(255,255,255,.8) 66%, #fff 72%, #fff 80%, #f2f4f8 100%),
    radial-gradient(ellipse 68% 68% at 18% -8%, #fff 52%, rgba(255,255,255,0) 100%),
    radial-gradient(ellipse 26% 60% at 104% 0%, rgba(244,245,248,1) 10%, rgba(244,245,248,0) 100%),
    radial-gradient(ellipse 42% 50% at 79% 46%, #d8dae7 0%, rgba(216,218,231,0) 100%),
    #e1e4ed;
`;
const TabRow = styled.div`
  display: flex;
  height: 28px;
`;
const Tab = styled.button`
  flex: none;
  width: ${(p) => p.$w}px;
  height: 28px;
  border: solid ${line};
  border-width: 0 1px 1px 0;
  background: ${(p) => (p.$on ? chrome : tabGrey)};
  color: #222;
  font-size: 15px;
  font-weight: ${(p) => (p.$on ? 700 : 400)};
  white-space: nowrap;
`;
const Hud = styled.div`
  display: flex;
  align-items: center;
  margin: 2px auto 0 375px;
  opacity: .85;
`;
const DocControls = styled.div`
  display: flex;
  align-items: center;
  padding-right: 5px;
`;
const Body = styled.div`
  flex: 1;
  display: flex;
`;

/* ---------- feature manager ---------- */
const Panel = styled.aside`
  display: flex;
  flex-direction: column;
  width: 273px;
  padding-right: 2px;
  border-right: 1px solid ${line};
  background: ${chrome};
`;
const Grip = styled.div`
  display: flex;
  align-items: center;
  justify-content: center;
  height: 21px;
  margin: 4px 0;
  border: solid ${soft};
  border-width: 1px 0;
`;
const Dot = styled.span`
  width: 6px;
  height: 6px;
  border: 1px solid #999;
  border-radius: 50%;
  background: #ccc;
`;
const PanelTabs = styled.div`
  display: flex;
  height: 26px;
  padding-left: 2px;
  overflow: hidden;
`;
const PanelTab = styled.button`
  flex: none;
  display: flex;
  align-items: center;
  justify-content: center;
  overflow: hidden;
  width: ${(p) => p.$w || 40}px;
  height: 26px;
  border: solid ${line};
  border-width: 1px 1px 1px 0;
  ${(p) => (p.$on ? css`border-bottom-color: transparent; background: ${chrome};` : css`background: ${tabGrey};`)}
  ${(p) => p.$cut && css`justify-content: flex-start; padding-left: 8px; border-right: 0;`}
  ${(p) => p.$scroll && css`height: 23px; margin-top: 3px; border: 1px solid #bbb; background: #f2f2f2;`}
`;
const Filter = styled.div`
  display: flex;
  align-items: center;
  height: 32px;
  margin: 0 4px 0 5px;
  padding-left: 1px;
  border: 1px solid #b8b8b8;
  input { flex: 1; min-width: 0; outline: 0; }
`;
const TreeArea = styled.div`
  flex: 1;
  display: flex;
  flex-direction: column;
  border-left: 1px solid #bbb;
`;
const Tree = styled.ul`
  overflow: hidden;
  border-bottom: 4px solid #3889c8;
  box-shadow: 0 1px #1b3a8c;
`;
const TreeRow = styled.li`
  display: flex;
  align-items: center;
  height: 24px;
  padding-left: ${(p) => (p.$root ? 3 : 7)}px;
  white-space: pre;
  font-size: 14px;
  svg + svg, button + svg { margin-left: 3px; }
`;
const Expander = styled.button`
  display: flex;
  flex: none;
  width: 15px;
  visibility: ${(p) => (p.$shown ? "visible" : "hidden")};
`;
const RowText = styled.span`
  padding-left: 4px;
`;
const ScrollBar = styled.div`
  display: flex;
  align-items: center;
  height: 20px;
  margin: auto 0 5px;
  background: #f0f0f0;
`;
const ScrollButton = styled.button`
  display: flex;
  justify-content: center;
  width: 21px;
`;
const Thumb = styled.span`
  width: 186px;
  height: 19px;
  margin-right: auto;
  background: #cdcdcd;
`;

/* ---------- viewport ---------- */
const Viewport = styled.section`
  position: relative;
  flex: 1;
`;
const Splitter = styled.button`
  position: absolute;
  left: -1px;
  top: 561px;
  display: flex;
  align-items: center;
  justify-content: center;
  width: 12px;
  height: 49px;
  padding-right: 2px;
  border: 1px solid ${line};
  border-left: 0;
  background: #fafafa;
`;
const Placed = styled.div`
  position: absolute;
  left: ${(p) => p.$x}px;
  top: ${(p) => p.$y}px;
`;
const ViewName = styled.div`
  position: absolute;
  left: 12px;
  bottom: 0;
  font: 400 17px/22px Lato, sans-serif;
  -webkit-text-stroke: 1px #111;
`;
const TaskPane = styled.nav`
  width: 32px;
  margin-top: 29px;
  border-top: 1px solid ${line};
`;
const PaneTab = styled.button`
  display: flex;
  align-items: center;
  justify-content: center;
  width: 32px;
  height: 30px;
  border: solid ${line};
  border-width: 0 0 1px 1px;
  background: ${(p) => (p.$on ? "#fbfbfb" : tabGrey)};
`;

/* ---------- bottom ---------- */
const BottomTabs = styled.div`
  display: flex;
  height: 21px;
  padding-left: 2px;
  border: solid ${line};
  border-width: 1px 0;
`;
const NavButton = styled.button`
  display: flex;
  align-items: center;
  justify-content: center;
  width: 20px;
  border: 1px solid #8e8fa5;
  background: #a9aabf;
`;
const BottomTab = styled(Tab)`
  height: 19px;
  padding-left: 14px;
  border-bottom: 0;
  text-align: left;
  line-height: 18px;
  color: #111;
`;
const StatusBar = styled.footer`
  display: flex;
  align-items: center;
  height: 21px;
  overflow: hidden;
  padding: 4px 2px 0 1px;
  font-size: 14px;
  line-height: 17px;
`;
const StatusItem = styled.span`
  width: ${(p) => p.$w}px;
  text-align: center;
  white-space: nowrap;
  ${(p) => p.$first && css`margin-left: auto;`}
  ${(p) => p.$unit && css`padding-left: 14px;`}
`;
const StatusGap = styled.span`
  width: ${(p) => p.$w}px;
  height: 20px;
  border: solid #ccc;
  border-width: 0 1px;
`;
const TaskBar = styled.footer`
  display: flex;
  align-items: stretch;
  height: 50px;
  background: #060a12;
  color: #f2f2f2;
`;
const TaskButton = styled.button`
  position: relative;
  display: flex;
  align-items: center;
  justify-content: center;
  width: ${(p) => p.$w || 62}px;
  ${(p) => p.$first && css`margin-left: 3px;`}
  ${(p) => p.$active && css`background: #393b40;`}
  ${(p) => p.$open && css`
    &::after {
      content: "";
      position: absolute;
      left: ${p.$active ? 0 : 6}px;
      right: ${p.$active ? 0 : 5}px;
      bottom: 0;
      height: 3px;
      background: #76b9ed;
    }
  `}
`;
const Tray = styled.div`
  display: flex;
  margin-left: auto;
`;
const Clock = styled.time`
  width: 84px;
  padding-top: 2px;
  text-align: center;
  font-size: 14px;
  line-height: 23px;
`;
const Badge = styled.span`
  position: absolute;
  left: 24px;
  top: 24px;
  width: 21px;
  height: 21px;
  border: 1px solid #888;
  border-radius: 50%;
  background: #2b2d33;
  font-size: 14px;
  font-weight: 700;
  line-height: 19px;
`;
const ShowDesktop = styled.button`
  width: 6px;
  margin-left: 10px;
  border-left: 1px solid #666;
  background: #1b1e25;
`;

/* ---------- data ---------- */
const menus = ["File", "Edit", "View", "Insert", "Tools", "Simulation", "Window", "Help"];
const quick = [["New", NewIcon], ["Open", OpenIcon], ["Save", SaveIcon], ["Print", PrintIcon], ["Undo", UndoIcon]];
const ribbon = [
  { t: "Edit\nComponent", I: EditComponentIcon, w: 88, disabled: true },
  { t: "Insert Components", I: InsertIcon, w: 122, menu: true },
  { t: "Mate", I: MateIcon, w: 50 },
  { t: "Component\nPreview Window", I: PreviewIcon, w: 102, disabled: true },
  { t: "Linear Component Pattern", I: PatternIcon, w: 182, menu: true },
  { t: "Smart\nFasteners", I: SmartIcon, w: 62 },
  { t: "Move Component", I: MoveIcon, w: 125, menu: true, sep: true },
  { t: "Show Hidden\nComponents", I: ShowHiddenIcon, w: 93, sep: true },
  { t: "Assemb...", I: AssemblyFeatIcon, w: 70, menu: true },
  { t: "Referenc...", I: ReferenceIcon, w: 71, menu: true, sep: true },
  { t: "New Motion\nStudy", I: MotionIcon, w: 88, sep: true },
  { t: "Bill of\nMaterials", I: BomIcon, w: 68, sep: true },
  { t: "Exploded View", I: ExplodedIcon, w: 100, menu: true, sep: true },
  { t: "Instant3D", I: Instant3DIcon, w: 71, on: true, sep: true },
  { t: "Update\nSpeedpak", I: SpeedpakIcon, w: 71, sep: true },
  { t: "Take\nSnapshot", I: CameraIcon, w: 70 },
  { t: "Large Assembly\nMode", I: LargeAsmIcon, w: 104 },
];
const tabs = [["Assembly", 89], ["Layout", 63], ["Sketch", 62], ["Evaluate", 74], ["SOLIDWORKS Add-Ins", 173], ["Simulation", 91], ["SOLIDWORKS MBD", 153], ["SOLIDWORKS CAM", 157]];
const hud = [
  ["Zoom to Fit", ZoomFit], ["Zoom to Area", ZoomArea], ["Previous View", PrevView], ["Section View", SectionIcon], ["Dynamic Annotation Views", DynAnnot],
  ["View Orientation", OrientIcon, 1], ["Display Style", DisplayStyle, 1], ["Hide/Show Items", EyeIcon, 1], ["Edit Appearance", EditAppear], ["Apply Scene", SceneIcon, 1], ["View Settings", MonitorIcon, 1],
];
const tree = [
  { t: "Assem2  (Default<Display State-1>)", I: [AssemblyIcon, CapIcon], root: true },
  { t: "History", I: [HistoryIcon], open: true },
  { t: "Sensors", I: [SensorIcon] },
  { t: "Annotations", I: [AnnotIcon], open: true },
  { t: "Front Plane", I: [PlaneIcon] },
  { t: "Top Plane", I: [PlaneIcon] },
  { t: "Right Plane", I: [PlaneIcon] },
  { t: "Origin", I: [OriginIcon] },
  { t: "(f) blocksr<1> (Default<Display State-1>)", I: [AssemblyIcon, CapIcon], open: true },
  { t: "Mates", I: [MatesIcon] },
];
const ListHeader = () => <ListIcon header />;
const paneTabs = [["Resources", HomeIcon], ["Design Library", LibraryIcon, 1], ["File Explorer", FolderOpen], ["View Palette", PaletteIcon], ["Appearances", BallIcon], ["Custom Properties", ListHeader], ["Forum", ForumIcon]];
const panelTabs = [["FeatureManager", AssemblyIcon], ["PropertyManager", ListHeader], ["ConfigurationManager", ConfigIcon], ["DimXpert", TargetIcon], ["DisplayManager", DisplayBall]];
const navs = [["First", "M2 1v10M10 1v10L4 6z"], ["Previous", "M9 1v10L3 6z"], ["Next", "M3 1v10l6-5z"], ["Last", "M10 1v10M2 1v10l6-5z"]];

const Bolt = ({ x = 0, y = 0, top, side }) => (
  <g transform={`translate(${x} ${y})`} stroke="#0a0a0a" strokeWidth="2.600" strokeLinejoin="round">
    <path d="M922 600Q1032 665 1030 745L1028 775 990 808 888 834 783 757 779 700 783 657 820 627z" fill="#111" />
    <path d="M783 657 888 632 990 706V808L888 834 783 757z" fill="#8b857e" />
    <path d="M888 632 990 706 984 740Q960 675 870 645z" fill="#22211f" />
    <path d="M783 657 820 627 922 600 888 632Q860 648 830 646 805 650 783 657z" fill="#fff" />
    <path d="M888 632 922 600 1028 677 990 706z" fill={top} />
    <path d="M990 706 1028 677V775L990 808 985 760z" fill={side} />
    <ellipse cx="883" cy="737" rx="110" ry="83" transform="rotate(30.500 883 737)" fill="#7b756f" />
  </g>
);

const Model = () => (
  <svg width="520" height="600" viewBox="0 0 1560 1568" preserveAspectRatio="none" role="img" aria-label="Bolted block assembly">
    <g stroke="#000" strokeWidth="3.600" strokeLinejoin="round">
      <path d="M307 64 1462 338 1340 441 186 168z" fill="#ff8a8a" />
      <path d="M186 168 1340 441 1219 544 64 271z" fill="#8ab4ff" />
      <path d="M64 271 1219 544V1519L64 1247z" fill="#294273" />
      <path d="M1219 544 1340 441V1415L1219 1519z" fill="#3c62ae" />
      <path d="M1340 441 1462 338V1312L1340 1415z" fill="#c23b39" />
    </g>
    <path d="M1340 445V1415" stroke="#ff8a00" strokeWidth="9" strokeDasharray="10 11" />
    <path d="M1332 638h21M1342 626v22" stroke="#ff8a00" strokeWidth="3" />
    <Bolt top="#242322" side="#e8dfd5" />
    <Bolt x={-628} y={318} top="#161514" side="#989088" />
  </svg>
);

const Triad = () => (
  <svg width="70" height="76" viewBox="0 0 70 76" role="img" aria-label="Axis triad" fontFamily="Lato, sans-serif" fontSize="14" textAnchor="middle">
    <path d="M26 48V22" stroke="#1d6b1d" strokeWidth="5" /><path d="M26 13l6 12q-6 4-12 0z" fill="#2f9a3a" />
    <path d="M26 46l22 5" stroke="#c01a1a" strokeWidth="4" /><path d="M60 54 48 46l-2 11z" fill="#e03030" />
    <path d="M26 45 15 56" stroke="#15157a" strokeWidth="5" /><path d="M8 63l3-10 8 1 1 8z" fill="#1a1ac8" />
    <text x="26" y="11" fill="#0a8a1a">Y</text><text x="63" y="59" fill="#f01818">X</text><text x="5" y="70" fill="#1616f0">Z</text>
  </svg>
);

const DsMark = () => (
  <svg width="27" height="28" viewBox="0 0 27 28" fill="none" stroke="#d8281e" strokeWidth="2.600" aria-hidden="true">
    <path d="M10 3c4-2 8-2 7 1-1 2-4 4-7 5" /><path d="M6 11c4 0 9 0 7 5-2 5-8 9-13 10l7-12" /><path d="M26 10c-6-2-9 1-7 4 2 2 6 3 4 7-1 3-6 3-9 2" />
  </svg>
);

/* ---------- page ---------- */
export default function App() {
  return (
    <Frame>
      <Global />
      <TitleBar>
        <TitleLeft>
          <Logo><DsMark /><span><b>SOLID</b>WORKS</span></Logo>
          <Menu aria-label="Main menu">{menus.map((m) => <MenuButton key={m}>{m}</MenuButton>)}</Menu>
          <IconButton aria-label="Pin menu"><PinIcon /></IconButton>
        </TitleLeft>
        <QuickBar>
          <IconButton aria-label="Home"><HomeIcon /></IconButton>
          {quick.map(([n, I]) => (
            <React.Fragment key={n}>
              <IconButton aria-label={n}><I /></IconButton>
              <CaretButton aria-label={`${n} options`}><Caret /></CaretButton>
            </React.Fragment>
          ))}
          <Selected>
            <IconButton aria-label="Select"><CursorIcon /></IconButton>
            <CaretButton aria-label="Select options"><Caret /></CaretButton>
          </Selected>
          <IconButton aria-label="Rebuild"><TrafficIcon /></IconButton>
          <IconButton aria-label="File properties"><ListIcon /></IconButton>
          <IconButton aria-label="Options"><GearIcon size={18} /></IconButton>
          <CaretButton aria-label="More options"><Caret /></CaretButton>
        </QuickBar>
        <DocTitle>Assem2 *</DocTitle>
        <TitleRight>
          <SearchBox>
            <HelpCircle />
            <input type="search" aria-label="Search SOLIDWORKS Help" placeholder="Search SOLIDWORKS Help" />
            <Magnifier />
            <Caret />
          </SearchBox>
          <IconButton aria-label="Account"><UserIcon /></IconButton>
          <IconButton aria-label="Help"><HelpMark /></IconButton>
          <CaretButton aria-label="Help options"><Caret /></CaretButton>
          <IconButton aria-label="Minimize"><MinIcon /></IconButton>
          <IconButton aria-label="Restore"><RestoreIcon /></IconButton>
          <IconButton aria-label="Close"><CloseIcon /></IconButton>
        </TitleRight>
      </TitleBar>

      <Ribbon>
        {ribbon.map(({ t, I, w, menu, disabled, on, sep }) => (
          <React.Fragment key={t}>
            <RibbonButton $w={w} $menu={menu} $on={on} disabled={disabled}>
              <I />
              <span>{t}</span>
              {menu && <Caret />}
            </RibbonButton>
            {sep && <Divider />}
          </React.Fragment>
        ))}
      </Ribbon>

      <Workspace>
        <TabRow>
          {tabs.map(([t, w], i) => <Tab key={t} $w={w} $on={i === 0}>{t}</Tab>)}
          <Hud>
            {hud.map(([n, I, caret]) => (
              <React.Fragment key={n}>
                <IconButton aria-label={n}><I /></IconButton>
                {caret && <CaretButton $w={14} aria-label={`${n} options`}><Caret color="#888" /></CaretButton>}
              </React.Fragment>
            ))}
          </Hud>
          <DocControls>
            <IconButton aria-label="Collapse left pane"><PaneIcon /></IconButton>
            <IconButton aria-label="Collapse right pane"><PaneIcon right /></IconButton>
            <IconButton aria-label="Minimize document"><MinIcon color="#9a9da2" /></IconButton>
            <IconButton aria-label="Restore document"><RestoreIcon color="#9a9da2" /></IconButton>
            <IconButton aria-label="Close document"><CloseIcon color="#9a9da2" /></IconButton>
          </DocControls>
        </TabRow>
        <Body>
          <Panel>
            <Grip><Dot /></Grip>
            <PanelTabs>
              {panelTabs.map(([n, I], i) => <PanelTab key={n} $on={i === 0} aria-label={n}><I /></PanelTab>)}
              <PanelTab $w={24} $cut aria-label="CAM tree"><CamIcon /></PanelTab>
              <PanelTab $w={23} $scroll aria-label="Scroll tabs left"><Svg size={10} box={10} stroke="none"><path d="M7 1v8L2 5z" fill="#000" /></Svg></PanelTab>
              <PanelTab $w={22} $scroll aria-label="Scroll tabs right"><Svg size={10} box={10} stroke="none"><path d="M3 1v8l5-4z" fill="#000" /></Svg></PanelTab>
            </PanelTabs>
            <Filter>
              <FunnelIcon /><Caret />
              <input type="text" aria-label="Filter tree" />
            </Filter>
            <TreeArea>
              <Tree>
                {tree.map(({ t, I, root, open }) => (
                  <TreeRow key={t} $root={root}>
                    {!root && (
                      <Expander $shown={open} aria-label={`Expand ${t}`}>
                        <Svg size={8} box={8} stroke="none"><path d="M2 0v8l4-4z" fill="#555" /></Svg>
                      </Expander>
                    )}
                    {I.map((Icon, i) => <Icon key={i} />)}
                    <RowText>{t}</RowText>
                  </TreeRow>
                ))}
              </Tree>
              <ScrollBar>
                <ScrollButton aria-label="Scroll left"><Svg size={12} box={12} stroke="#555" strokeWidth="2"><path d="M8 1 3 6l5 5" /></Svg></ScrollButton>
                <Thumb />
                <ScrollButton aria-label="Scroll right"><Svg size={12} box={12} stroke="#555" strokeWidth="2"><path d="M4 1l5 5-5 5" /></Svg></ScrollButton>
              </ScrollBar>
            </TreeArea>
          </Panel>
          <Viewport aria-label="Graphics area">
            <Splitter aria-label="Resize panel"><Dot /></Splitter>
            <Placed $x={797} $y={312}><Model /></Placed>
            <Placed $x={25} $y={1087}><Triad /></Placed>
            <ViewName>*Trimetric</ViewName>
          </Viewport>
          <TaskPane aria-label="Task pane">
            {paneTabs.map(([n, I, on]) => <PaneTab key={n} $on={on} aria-label={n}><I /></PaneTab>)}
          </TaskPane>
        </Body>
      </Workspace>

      <BottomTabs>
        {navs.map(([n, d]) => (
          <NavButton key={n} aria-label={`${n} tab`}><Svg size={12} box={12} stroke="#7b7c92"><path d={d} fill="#7b7c92" /></Svg></NavButton>
        ))}
        <BottomTab $w={77} $on>Model</BottomTab>
        <BottomTab $w={89}>3D Views</BottomTab>
        <BottomTab $w={144}>Motion Study 1</BottomTab>
      </BottomTabs>
      <StatusBar>
        <span>SOLIDWORKS Education Edition - Instructional Use Only</span>
        <StatusItem $w={100} $first>Fully Defined</StatusItem>
        <StatusGap $w={9} />
        <StatusItem $w={123}>Editing Assembly</StatusItem>
        <StatusGap $w={17} />
        <StatusItem $w={107} $unit>IPS</StatusItem>
        <Caret up />
        <StatusItem $w={66} />
        <TagIcon />
      </StatusBar>
      <TaskBar>
        <TaskButton $w={60} aria-label="Start"><WinIcon /></TaskButton>
        <TaskButton $w={60} aria-label="Search"><SearchIcon /></TaskButton>
        <TaskButton $w={60} aria-label="Task view"><TaskViewIcon /></TaskButton>
        <TaskButton $first aria-label="File Explorer"><ExplorerIcon /></TaskButton>
        <TaskButton $open aria-label="Chrome"><ChromeIcon /></TaskButton>
        <TaskButton aria-label="Internet Explorer"><IeIcon /></TaskButton>
        <TaskButton $open $active aria-label="Help viewer"><HelpAppIcon /></TaskButton>
        <Tray>
          <TaskButton $w={60} aria-label="People"><PeopleIcon /></TaskButton>
          <TaskButton $w={30} aria-label="Show hidden icons"><ChevronUp /></TaskButton>
          <TaskButton $w={30} aria-label="Network"><NetIcon /></TaskButton>
          <TaskButton $w={30} aria-label="Volume"><VolumeIcon /></TaskButton>
          <Clock>9:55 AM<br />7/29/2019</Clock>
          <TaskButton $w={50} aria-label="Notifications"><NotifyIcon /><Badge>2</Badge></TaskButton>
          <ShowDesktop aria-label="Show desktop" />
        </Tray>
      </TaskBar>
    </Frame>
  );
}
